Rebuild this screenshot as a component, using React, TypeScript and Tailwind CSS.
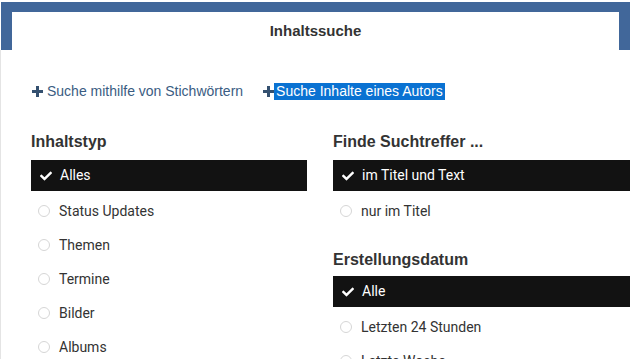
import React from "react";
import { FaCheck } from "react-icons/fa";

const arial = { fontFamily: '"Liberation Sans", Arial, sans-serif' };

type Item = { label: string; active?: boolean };

const typeItems: Item[] = [
  { label: "Alles", active: true },
  { label: "Status Updates" },
  { label: "Themen" },
  { label: "Termine" },
  { label: "Bilder" },
  { label: "Albums" },
];

const matchItems: Item[] = [
  { label: "im Titel und Text", active: true },
  { label: "nur im Titel" },
];

const dateItems: Item[] = [
  { label: "Alle", active: true },
  { label: "Letzten 24 Stunden" },
  { label: "Letzte Woche" },
];

// thick plus like the font-awesome one
const Plus = () => (
  <svg width="11" height="11" viewBox="0 0 11 11" className="text-[#34506f] shrink-0">
    <rect x="4" y="0" width="3" height="11" fill="currentColor" />
    <rect x="0" y="4" width="11" height="3" fill="currentColor" />
  </svg>
);

const OptionList = ({ items }: { items: Item[] }) => (
  <ul className="flex flex-col">
    {items.map((item, index) =>
      item.active ? (
        <li
          key={index}
          className="h-[31px] mb-[3px] flex items-center bg-[#121212] text-white pl-[9px] gap-[8px]"
        >
          <FaCheck className="w-[12px] h-[12px]" />
          <span className="text-[14px]">{item.label}</span>
        </li>
      ) : (
        <li key={index} className="h-[34px] flex items-center pl-[7px] gap-[9px] text-[#333]">
          <span className="w-[12px] h-[12px] rounded-full border-[1.5px] border-[#d6d6d6]" />
          <span className="text-[14px]">{item.label}</span>
        </li>
      )
    )}
  </ul>
);

const Heading = ({ children, tight }: { children: React.ReactNode; tight?: boolean }) => (
  <h2
    className={
      tight
        ? "text-[16px] font-bold leading-[18px] text-[#333] mb-[7px]"
        : "text-[16px] font-bold leading-[18px] text-[#333] mb-[9px]"
    }
    style={arial}
  >
    {children}
  </h2>
);

export default function App() {
  return (
    <div
      className="w-[630px] h-[359px] overflow-hidden bg-white"
      style={{ fontFamily: "Roboto, Arial, sans-serif" }}
    >
      <div className="pt-[2px] pl-[1px]">
        <div className="bg-[#41679a] pl-[11px] pr-[11px] pt-[10px] w-[640px]">
          <div className="bg-white h-[38px] w-[607px] flex items-center justify-center">
            <span className="text-[15px] font-bold text-[#333]" style={arial}>
              Inhaltssuche
            </span>
          </div>
        </div>
      </div>

      <div className="border-l border-[#e4e4e4] pl-[30px] w-[700px]">
        <div className="h-[83px] flex items-center gap-[20px] text-[14px] text-[#3a5c82]" style={arial}>
          <span className="flex items-center gap-[4px] ml-[1px]">
            <Plus />
            Suche mithilfe von Stichwörtern
          </span>
          <span className="flex items-center">
            <Plus />
            <span className="bg-[#0a72d2] text-white px-[2px] leading-[17px]">
              Suche Inhalte eines Autors
            </span>
          </span>
        </div>

        <div className="grid grid-cols-[276px_300px] gap-[26px]">
          <div>
            <Heading>Inhaltstyp</Heading>
            <OptionList items={typeItems} />
          </div>
          <div>
            <Heading>Finde Suchtreffer ...</Heading>
            <OptionList items={matchItems} />
            <div className="mt-[23px]">
              <Heading tight>Erstellungsdatum</Heading>
              <OptionList items={dateItems} />
            </div>
          </div>
        </div>
      </div>
    </div>
  );
}
